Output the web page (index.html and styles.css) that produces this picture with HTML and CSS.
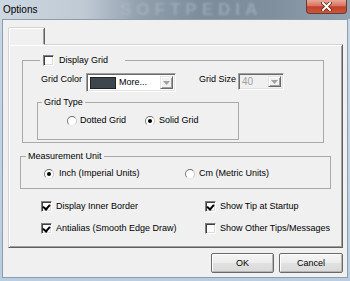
FILE: index.html
```html
<!DOCTYPE html>
<html>
<head>
  <title>Options</title>
  <link rel="stylesheet" href="styles.css">
</head>
<body>
  <div class="window">
    <div class="titlebar">
      <span class="title">Options</span>
      <span class="watermark">SOFTPEDIA</span>
      <span class="close">
        <svg width="11" height="9" viewBox="0 0 11 9">
          <path d="M2 1 L9 8 M9 1 L2 8" stroke="#5b1d12" stroke-width="3.4" stroke-linecap="square"/>
          <path d="M2 1 L9 8 M9 1 L2 8" stroke="#fff" stroke-width="2" stroke-linecap="square"/>
        </svg>
      </span>
    </div>

    <div class="client">
      <div class="tabs">
        <div class="tab active"></div>
      </div>

      <div class="panel">
        <fieldset class="group grid-group">
          <legend class="check-legend"><span class="check"></span>Display Grid</legend>
          <div class="row">
            <label class="lbl color-lbl">Grid Color</label>
            <div class="combo color-combo">
              <span class="swatch"></span>
              <span class="combo-text">More...</span>
              <span class="drop">
                <svg width="7" height="4" viewBox="0 0 7 4"><path d="M0 0 H7 L3.5 4 Z" fill="#a0a0a0"/></svg>
              </span>
            </div>
            <label class="lbl size-lbl">Grid Size</label>
            <div class="combo size-combo disabled">
              <span class="combo-text">40</span>
              <span class="drop">
                <svg width="7" height="4" viewBox="0 0 7 4"><path d="M0 0 H7 L3.5 4 Z" fill="#a0a0a0"/></svg>
              </span>
            </div>
          </div>

          <fieldset class="group type-group">
            <legend>Grid Type</legend>
            <div class="options">
              <span class="opt dotted"><span class="radio"></span>Dotted Grid</span>
              <span class="opt"><span class="radio on"></span>Solid Grid</span>
            </div>
          </fieldset>
        </fieldset>

        <fieldset class="group unit-group">
          <legend>Measurement Unit</legend>
          <div class="options">
            <span class="opt inch"><span class="radio on"></span>Inch (Imperial Units)</span>
            <span class="opt"><span class="radio"></span>Cm (Metric Units)</span>
          </div>
        </fieldset>

        <div class="checks">
          <span class="opt"><span class="check on"></span>Display Inner Border</span>
          <span class="opt"><span class="check on"></span>Show Tip at Startup</span>
          <span class="opt"><span class="check on"></span>Antialias (Smooth Edge Draw)</span>
          <span class="opt"><span class="check"></span>Show Other Tips/Messages</span>
        </div>
      </div>

      <div class="buttons">
        <button class="btn ok">OK</button>
        <button class="btn cancel">Cancel</button>
      </div>
    </div>
  </div>
</body>
</html>
```

FILE: styles.css
```css
* {
  box-sizing: border-box;
}

body {
  margin: 0;
  padding: 0;
  font-family: "Liberation Sans", Arial, sans-serif;
  font-size: 9px;
  color: #000;
  background: #fff;
}

.window {
  width: 350px;
  height: 281px;
  display: flex;
  flex-direction: column;
  background: linear-gradient(180deg, #c9d7e4, #b9cde2);
  overflow: hidden;
}

/* title bar */
.titlebar {
  position: relative;
  height: 19px;
  flex: none;
  display: flex;
  justify-content: space-between;
  align-items: flex-start;
  background: linear-gradient(90deg, #cdd7e1 0%, #bfcad5 24%, #919fad 40%, #7c8c9b 58%, #808f9e 78%, #93a3b2 100%);
  overflow: hidden;
}

.title {
  position: relative;
  z-index: 1;
  margin: 4px 0 0 3px;
  font-size: 10px;
  line-height: 11px;
}

.watermark {
  position: absolute;
  left: 120px;
  top: 1px;
  font-size: 17px;
  line-height: 17px;
  font-weight: bold;
  letter-spacing: 5px;
  color: #aebbc8;
  opacity: 0.55;
  filter: blur(1.2px);
}

.close {
  position: relative;
  z-index: 1;
  width: 41px;
  height: 14px;
  margin-right: 3px;
  display: flex;
  align-items: center;
  justify-content: center;
  border: 1px solid #6b3a32;
  border-top: none;
  border-radius: 0 0 4px 4px;
  background: linear-gradient(180deg, #e9a897 0%, #d77460 45%, #c2412a 52%, #c8573a 100%);
}

/* client area */
.client {
  flex: 1;
  margin: 0 2px 3px 2px;
  display: flex;
  flex-direction: column;
  padding: 7px 4px 4px 5px;
  border: 1px solid #8e9dab;
  background-color: #f0f0f0;
}

.tabs {
  display: flex;
  height: 17px;
  flex: none;
}

.tab {
  position: relative;
  z-index: 1;
  width: 37px;
  height: 18px;
  background-color: #f0f0f0;
  border: 1px solid;
  border-color: #d4d4d4 #5f5f5f transparent #d4d4d4;
  border-radius: 2px 2px 0 0;
  box-shadow: inset 1px 1px 0 #fff, inset -1px 0 0 #a0a0a0;
}

.panel {
  flex: 1;
  display: flex;
  flex-direction: column;
  align-items: flex-start;
  border: 1px solid;
  border-color: #d4d4d4 #5f5f5f #5f5f5f #d4d4d4;
  box-shadow: inset 1px 1px 0 #fff, inset -1px -1px 0 #a0a0a0;
}

/* group boxes */
.group {
  margin: 0;
  padding: 0;
  min-width: 0;
  border: 1px solid #a9a9a9;
}

.group legend {
  padding: 0 2px;
  height: 11px;
  line-height: 11px;
}

.check-legend {
  display: flex;
  align-items: center;
  gap: 5px;
}

.grid-group {
  margin: 10px 0 0 13px;
  width: 302px;
  padding: 7px 0 2px 14px;
}

.grid-group > legend {
  margin-left: 3px;
  padding: 0 17px 0 3px;
}

.row {
  display: flex;
  align-items: flex-start;
  margin-left: 4px;
  height: 19px;
}

.lbl {
  line-height: 11px;
  margin-top: 1px;
}

.color-lbl {
  width: 45px;
}

.size-lbl {
  width: 39px;
  margin-left: 23px;
}

.combo {
  display: flex;
  align-items: center;
  padding: 2px;
  border: 1px solid;
  border-color: #a0a0a0 #fff #fff #a0a0a0;
  box-shadow: inset 1px 1px 0 #696969, inset -1px -1px 0 #e3e3e3;
  background-color: #fff;
}

.color-combo {
  width: 90px;
  height: 19px;
}

.size-combo {
  width: 46px;
  height: 17px;
}

.combo.disabled {
  background-color: #f0f0f0;
  color: #a0a0a0;
}

.swatch {
  width: 26px;
  height: 12px;
  margin-left: 1px;
  background-color: #3d474d;
  border: 1px solid #222;
}

.combo-text {
  flex: 1;
  margin-left: 3px;
  line-height: 11px;
}

.size-combo .combo-text {
  margin-left: 1px;
  font-size: 10px;
}

.drop {
  width: 13px;
  align-self: stretch;
  display: flex;
  align-items: center;
  justify-content: center;
  background-color: #f0f0f0;
  border: 1px solid;
  border-color: #e3e3e3 #696969 #696969 #e3e3e3;
  box-shadow: inset 1px 1px 0 #fff, inset -1px -1px 0 #a0a0a0;
}

.type-group {
  margin-top: 5px;
  width: 202px;
  padding: 7px 0 13px 0;
}

.type-group legend {
  margin-left: 4px;
}

.type-group .options {
  margin-left: 29px;
}

.unit-group {
  margin: 8px 0 0 11px;
  width: 311px;
  padding: 6px 0 9px 0;
}

.unit-group legend {
  margin-left: 5px;
}

.unit-group .options {
  margin-left: 23px;
}

.options {
  display: flex;
  height: 11px;
}

.opt {
  display: flex;
  align-items: center;
  gap: 4px;
  height: 11px;
  line-height: 11px;
  white-space: nowrap;
}

.dotted {
  width: 78px;
  gap: 3px;
}

.inch {
  width: 141px;
  gap: 5px;
}

/* radios and checkboxes */
.radio {
  position: relative;
  width: 10px;
  height: 10px;
  border-radius: 50%;
  border: 1px solid;
  border-color: #6e6e6e #c8c8c8 #e6e6e6 #7a7a7a;
  background-color: #fff;
}

.radio.on::after {
  content: "";
  position: absolute;
  left: 2px;
  top: 2px;
  width: 4px;
  height: 4px;
  border-radius: 50%;
  background-color: #000;
}

.check {
  position: relative;
  flex: none;
  width: 11px;
  height: 11px;
  border: 1px solid;
  border-color: #808080 #fff #fff #808080;
  box-shadow: inset 1px 1px 0 #404040, inset -1px -1px 0 #dcdcdc;
  background-color: #fff;
}

.check.on::after {
  content: "";
  position: absolute;
  left: 2px;
  top: 1px;
  width: 3px;
  height: 5px;
  border: solid #000;
  border-width: 0 2px 2px 0;
  transform: rotate(40deg);
}

.checks {
  display: grid;
  grid-template-columns: 164px auto;
  row-gap: 11px;
  margin: 12px 0 0 32px;
}

/* buttons */
.buttons {
  display: flex;
  justify-content: flex-end;
  gap: 5px;
  margin-top: 5px;
  flex: none;
}

.btn {
  height: 20px;
  padding: 0;
  font-family: "Liberation Sans", Arial, sans-serif;
  font-size: 9px;
  color: #000;
  border: 1px solid #6a6a6a;
  border-radius: 2px;
  background: linear-gradient(180deg, #f6f6f6 0%, #ececec 50%, #e1e1e1 51%, #d9d9d9 100%);
  box-shadow: inset 1px 1px 0 #fff, inset -1px -1px 0 #b5b5b5;
}

.ok {
  width: 63px;
}

.cancel {
  width: 64px;
}
```
